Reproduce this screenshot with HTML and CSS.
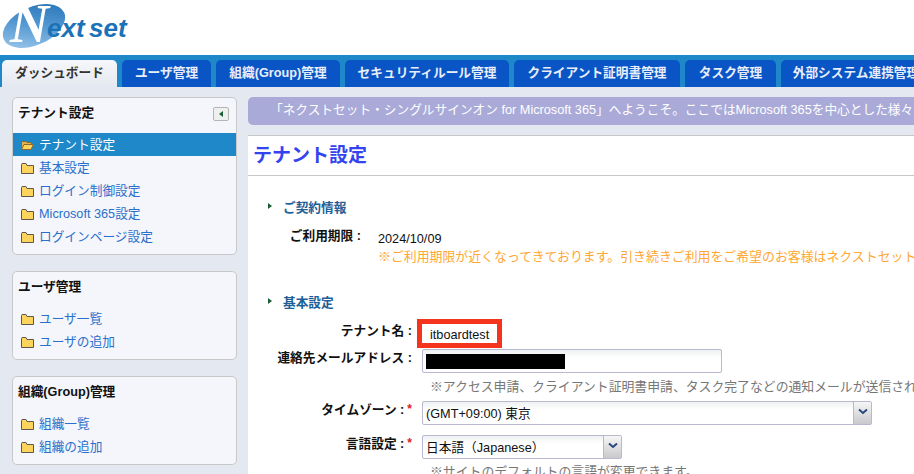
FILE: index.html
```html
<!DOCTYPE html>
<html lang="ja">
<head>
<meta charset="utf-8">
<title>テナント設定</title>
<link rel="stylesheet" href="styles.css">
</head>
<body>
<svg class="defs" width="0" height="0" aria-hidden="true">
  <defs>
    <linearGradient id="lg" x1="0" y1="1" x2="1" y2="0">
      <stop offset="0" stop-color="#a9d0ef"/>
      <stop offset="0.55" stop-color="#4f95d0"/>
      <stop offset="1" stop-color="#1d6db2"/>
    </linearGradient>
    <symbol id="folder" viewBox="0 0 13 12">
      <path d="M.5 2.5V11.5H12.5V3.5H6L5 1.5H1Z" fill="#fcd35c" stroke="#5f584a"/>
    </symbol>
    <symbol id="chev" viewBox="0 0 10 7">
      <path d="M1 1.5L5 5L9 1.5" fill="none" stroke="#27477f" stroke-width="2"/>
    </symbol>
  </defs>
</svg>
<header class="logo-bar">
  <svg class="logo" width="130" height="52" viewBox="0 0 130 52">
    <ellipse cx="33" cy="25" rx="33" ry="19" transform="rotate(-24 33 25)" fill="url(#lg)"/>
    <text class="logo-n" x="9" y="41">N</text>
    <text class="logo-rest" x="46" y="36">ext</text>
    <text class="logo-rest" x="88" y="36">set</text>
  </svg>
</header>
<nav class="tabs">
  <a class="tab active w1">ダッシュボード</a>
  <a class="tab w2">ユーザ管理</a>
  <a class="tab w3">組織(Group)管理</a>
  <a class="tab w4">セキュリティルール管理</a>
  <a class="tab w5">クライアント証明書管理</a>
  <a class="tab w6">タスク管理</a>
  <a class="tab w7">外部システム連携管理</a>
</nav>
<div class="layout">
  <aside class="sidebar">
    <section class="card">
      <div class="card-head">
        <h2>テナント設定</h2>
        <button class="collapse" type="button" aria-label="閉じる"><span class="tri-left"></span></button>
      </div>
      <ul class="menu">
        <li class="current">
          <svg class="ico" width="13" height="12" viewBox="0 0 13 12"><path d="M.5 10.5V2.5H5L6 3.5H10.5V5.5" fill="#e0b04c" stroke="#8a6a2a"/><path d="M.5 10.5L3 5.5H12.5L10 10.5Z" fill="#fcd35c" stroke="#8a6a2a"/></svg>
          <a>テナント設定</a>
        </li>
        <li><svg class="ico" width="13" height="12"><use href="#folder"/></svg><a>基本設定</a></li>
        <li><svg class="ico" width="13" height="12"><use href="#folder"/></svg><a>ログイン制御設定</a></li>
        <li><svg class="ico" width="13" height="12"><use href="#folder"/></svg><a>Microsoft 365設定</a></li>
        <li><svg class="ico" width="13" height="12"><use href="#folder"/></svg><a>ログインページ設定</a></li>
      </ul>
    </section>
    <section class="card">
      <div class="card-head"><h2>ユーザ管理</h2></div>
      <ul class="menu">
        <li><svg class="ico" width="13" height="12"><use href="#folder"/></svg><a>ユーザ一覧</a></li>
        <li><svg class="ico" width="13" height="12"><use href="#folder"/></svg><a>ユーザの追加</a></li>
      </ul>
    </section>
    <section class="card">
      <div class="card-head"><h2>組織(Group)管理</h2></div>
      <ul class="menu">
        <li><svg class="ico" width="13" height="12"><use href="#folder"/></svg><a>組織一覧</a></li>
        <li><svg class="ico" width="13" height="12"><use href="#folder"/></svg><a>組織の追加</a></li>
      </ul>
    </section>
  </aside>
  <main class="main">
    <p class="notice">「ネクストセット・シングルサインオン for Microsoft 365」へようこそ。ここではMicrosoft 365を中心とした様々な設定を行うことができます。</p>
    <div class="panel">
      <h1>テナント設定</h1>
      <div class="content">
        <h3 class="section"><span class="tri-right"></span>ご契約情報</h3>
        <div class="contract">
          <div class="contract-label">ご利用期限 :</div>
          <div class="contract-value">
            <div class="date">2024/10/09</div>
            <div class="warn">※ご利用期限が近くなってきております。引き続きご利用をご希望のお客様はネクストセットまでご連絡ください。</div>
          </div>
        </div>
        <h3 class="section second"><span class="tri-right"></span>基本設定</h3>
        <div class="row r-name">
          <div class="label l-name">テナント名 :</div>
          <div class="tenant">itboardtest</div>
        </div>
        <div class="row r-mail">
          <div class="label">連絡先メールアドレス :</div>
          <div class="field mail"><span class="redact"></span></div>
        </div>
        <div class="hint">※アクセス申請、クライアント証明書申請、タスク完了などの通知メールが送信されます。</div>
        <div class="row r-tz">
          <div class="label">タイムゾーン :<span class="req">*</span></div>
          <div class="field sel tz"><span class="val">(GMT+09:00) 東京</span><span class="drop"><svg width="10" height="7"><use href="#chev"/></svg></span></div>
        </div>
        <div class="row r-lang">
          <div class="label">言語設定 :<span class="req">*</span></div>
          <div class="field sel lang"><span class="val">日本語（Japanese）</span><span class="drop"><svg width="10" height="7"><use href="#chev"/></svg></span></div>
        </div>
        <div class="hint h2">※サイトのデフォルトの言語が変更できます。</div>
      </div>
    </div>
  </main>
</div>
</body>
</html>
```

FILE: styles.css
```css
* { box-sizing: border-box; }
html, body {
  margin: 0;
  height: 474px;
  overflow: hidden;
}
body {
  width: 914px;
  background: #e4e8f0;
  color: #111;
  font-family: "Liberation Sans", "Noto Sans CJK JP", sans-serif;
  font-size: 12.7px;
}
.defs { display: block; height: 0; }
.logo-bar { height: 55px; background: #fff; padding: 1px 0 0 1px; }
.logo { display: block; }
.logo-n {
  font-family: "Liberation Serif", serif;
  font-style: italic;
  font-weight: 700;
  font-size: 54px;
  fill: #fff;
}
.logo-rest {
  font-family: "Liberation Sans", sans-serif;
  font-style: italic;
  font-weight: 700;
  font-size: 26px;
  fill: #1c72b6;
}
.tabs {
  display: flex;
  gap: 5px;
  height: 32px;
  padding: 5px 0 0 2px;
  background: #1e88c9;
  white-space: nowrap;
  overflow: hidden;
}
.tab {
  flex: none;
  height: 27px;
  line-height: 26px;
  text-align: center;
  border-radius: 5px 5px 0 0;
  background: #0a55c5;
  color: #e8eefa;
  font-weight: 700;
  font-size: 12.7px;
}
.tab.active {
  background: linear-gradient(#f6f7fa, #e4e8f0);
  color: #333;
}
.w1 { width: 115px; }
.w2 { width: 89px; }
.w3 { width: 124px; }
.w4 { width: 164px; }
.w5 { width: 166px; }
.w6 { width: 91px; }
.w7 { width: 150px; }
.layout { display: flex; padding: 10px 0 0 12px; gap: 11px; }
.sidebar { flex: none; width: 225px; display: flex; flex-direction: column; gap: 16px; }
.card {
  background: #f4f6fb;
  border: 1px solid #c8c8c8;
  border-radius: 5px;
  padding-bottom: 6px;
}
.card-head {
  display: flex;
  align-items: flex-start;
  justify-content: space-between;
  height: 35px;
  padding: 5px 7px 0 5px;
}
.card-head h2 { margin: 0; font-size: 12.7px; line-height: 20px; font-weight: 700; color: #111; }
.collapse {
  display: flex;
  align-items: center;
  justify-content: center;
  width: 16px;
  height: 14px;
  margin-top: 4px;
  padding: 0;
  background: #eef0ee;
  border: 1px solid #b4b4b4;
  border-radius: 2px;
}
.tri-left {
  width: 0;
  height: 0;
  border-style: solid;
  border-width: 3.5px 4px 3.5px 0;
  border-color: transparent #1a5e35 transparent transparent;
}
.menu { list-style: none; margin: 0; padding: 0; }
.menu li {
  display: flex;
  align-items: center;
  height: 23px;
  padding: 0 0 2px 8px;
  color: #2a6fcb;
  font-size: 12.7px;
}
.menu li.current { background: #1e88c9; color: #fff; }
.ico { flex: none; margin: 3px 5px 0 0; }
.main { flex: none; width: 666px; overflow: hidden; }
.notice {
  margin: 0;
  height: 28px;
  line-height: 27px;
  padding-left: 22px;
  border-radius: 5px 0 0 5px;
  background: #aaaad8;
  color: #fff;
  font-size: 12.7px;
  white-space: nowrap;
  overflow: hidden;
}
.panel {
  margin-top: 10px;
  height: 400px;
  background: #fff;
  border-top: 1px solid #c8c8c8;
}
.panel h1 {
  margin: 0;
  height: 40px;
  line-height: 40px;
  padding-left: 5px;
  border-bottom: 1px solid #c8c8c8;
  color: #3344ee;
  font-size: 19px;
  font-weight: 700;
}
.content { padding: 20px 0 0 20px; white-space: nowrap; overflow: hidden; }
.section {
  display: flex;
  align-items: center;
  margin: 0;
  height: 20px;
  color: #1d6098;
  font-size: 12.7px;
  font-weight: 700;
}
.section.second { margin-top: 26px; }
.tri-right {
  flex: none;
  width: 0;
  height: 0;
  margin-right: 11px;
  border-style: solid;
  border-width: 3.5px 0 3.5px 4px;
  border-color: transparent transparent transparent #1a5e35;
}
.contract { display: flex; margin-top: 11px; }
.contract-label {
  flex: none;
  width: 93px;
  text-align: right;
  font-weight: 700;
  line-height: 18px;
}
.contract-value { margin-left: 17px; padding-top: 3px; }
.date { height: 18px; line-height: 19px; color: #111; }
.warn { color: #ffa733; font-size: 12.9px; line-height: 17px; }
.row { display: flex; align-items: center; }
.label {
  flex: none;
  width: 146px;
  text-align: right;
  padding: 0 2px 9px 0;
  font-weight: 700;
}
.req { margin-left: 3px; color: #e02020; font-weight: 700; font-size: 12px; vertical-align: 1px; }
.r-name { margin-top: 8px; height: 29px; }
.tenant {
  margin-left: 3px;
  width: 85px;
  height: 29px;
  line-height: 23px;
  padding-left: 8px;
  border: 5px solid #f5341d;
  color: #111;
}
.r-mail { height: 24px; margin-top: 1px; }
.field {
  flex: none;
  height: 24px;
  margin-left: 8px;
  background: linear-gradient(#eef1f2, #fff 8px);
  border: 1px solid #b8b8d0;
  border-radius: 2px;
}
.mail { width: 300px; padding: 4px 3px; }
.redact { display: block; width: 139px; height: 15px; background: #000; }
.hint {
  margin: 5px 0 0 162px;
  height: 19px;
  font-size: 12.85px;
  line-height: 18px;
  color: #777;
}
.r-tz { height: 24px; margin-top: 4px; }
.r-lang { height: 24px; margin-top: 10px; }
.sel { display: flex; justify-content: space-between; align-items: stretch; }
.tz { width: 450px; }
.lang { width: 200px; }
.val { line-height: 24px; padding-left: 3px; color: #111; }
.drop {
  flex: none;
  display: flex;
  align-items: flex-start;
  justify-content: center;
  width: 18px;
  padding-top: 6px;
  background: linear-gradient(#f6f6f6, #c9c9cd);
  border-left: 1px solid #b8b8d0;
}
.h2 { margin-top: 4px; }
```
